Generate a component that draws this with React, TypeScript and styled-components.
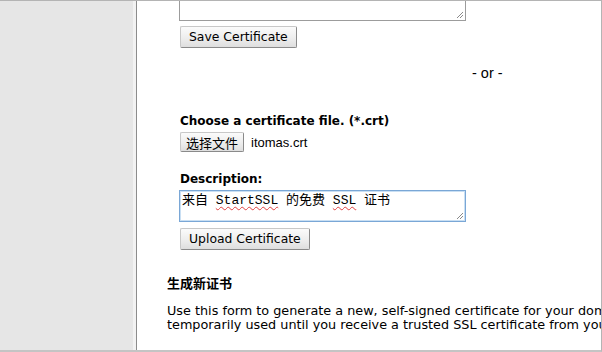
import React from 'react'
import styled, { createGlobalStyle } from 'styled-components'

const GlobalStyle = createGlobalStyle`
  html, body {
    margin: 0;
    padding: 0;
    background: #ffffff;
  }
  body {
    font-family: 'DejaVu Sans', Verdana, sans-serif;
    color: #000;
  }
`

const Frame = styled.div`
  width: 602px;
  height: 352px;
  box-sizing: border-box;
  border-top: 1px solid #b4b4b4;
  border-right: 1px solid #b4b4b4;
  border-bottom: 2px solid #c4c4c4;
  display: flex;
  overflow: hidden;
`

const Sidebar = styled.div`
  width: 133px;
  flex: 0 0 133px;
  background: #e6e6e6;
  border-right: 3px solid #f2f2f2;
`

const Divider = styled.div`
  width: 1px;
  flex: 0 0 1px;
  background: #8c8c8c;
`

const Content = styled.div`
  flex: 1;
  position: relative;
  overflow: hidden;
`

// the pane is scrolled down a little: the first textarea is cut off at the top
const Scroller = styled.div`
  width: 720px;
  margin-top: -31px;
  padding-left: 30px;
`

const Form = styled.div`
  padding-left: 13px;
`

const TextBox = styled.div<{ $focused?: boolean; $height: number }>`
  position: relative;
  box-sizing: border-box;
  width: 287px;
  height: ${p => p.$height}px;
  margin-left: -1px;
  border: 1px solid ${p => (p.$focused ? '#7aa7d6' : '#9c9c9c')};
  box-shadow: ${p => (p.$focused ? 'inset 0 0 0 1px #c9dff3' : 'none')};
  background: #fff;
  padding: 2px 2px;
  font-family: 'Liberation Mono', 'Noto Sans CJK SC', monospace;
  font-size: 13px;
  line-height: 15px;
`

const Squiggle = styled.span`
  text-decoration: underline wavy #e04040;
  text-decoration-thickness: 1px;
  text-underline-offset: 2px;
`

const Grip = styled.svg`
  position: absolute;
  right: 1px;
  bottom: 1px;
`

const Button = styled.button<{ $cjk?: boolean }>`
  display: block;
  box-sizing: border-box;
  height: ${p => (p.$cjk ? 20 : 22)}px;
  padding: 0 ${p => (p.$cjk ? 5 : 8)}px;
  border: 1px solid #c8c8c8;
  border-right-color: #8a8a8a;
  border-bottom-color: #8a8a8a;
  border-radius: 2px;
  background: linear-gradient(#fbfbfb, #ececec 60%, #dedede);
  font-family: ${p =>
    p.$cjk
      ? "'Noto Sans CJK SC', sans-serif"
      : "'DejaVu Sans', Verdana, sans-serif"};
  font-size: ${p => (p.$cjk ? 13 : 12.4)}px;
  line-height: 1;
  color: #000;
`

const OrLine = styled.div`
  font-family: 'Liberation Sans', Arial, sans-serif;
  font-size: 14.5px;
  line-height: 16px;
  padding-left: 305px;
  margin-top: 17px;
  height: 18px;
`

const Label = styled.div<{ $top: number; $bottom: number }>`
  font-weight: bold;
  font-size: 12px;
  line-height: 15px;
  margin-top: ${p => p.$top}px;
  margin-bottom: ${p => p.$bottom}px;
`

const FileRow = styled.div`
  display: flex;
  align-items: center;
  gap: 7px;
`

const FileName = styled.span`
  font-family: 'Liberation Sans', Arial, sans-serif;
  font-size: 13px;
`

const Gap = styled.div<{ $h: number }>`
  height: ${p => p.$h}px;
`

const Heading = styled.div`
  margin-top: 25px;
  font-family: 'Noto Sans CJK SC', sans-serif;
  font-weight: bold;
  font-size: 13px;
  line-height: 15px;
`

const Paragraph = styled.p`
  margin: 14px 0 0;
  font-size: 12.8px;
  line-height: 14px;
  white-space: nowrap;
`

const GripIcon = () => (
  <Grip width="8" height="8" viewBox="0 0 8 8">
    <path d="M7 1 L1 7 M7 4 L4 7" stroke="#8a8a8a" strokeWidth="1" />
  </Grip>
)

export default function App() {
  return (
    <>
      <GlobalStyle />
      <Frame>
        <Sidebar />
        <Divider />
        <Content>
          <Scroller>
            <Form>
              <TextBox $height={51}>
                <GripIcon />
              </TextBox>
              <Gap $h={5} />
              <Button>Save Certificate</Button>
            </Form>
            <OrLine>- or -</OrLine>
            <Form>
              <Label $top={31} $bottom={3}>
                Choose a certificate file. (*.crt)
              </Label>
              <FileRow>
                <Button $cjk>选择文件</Button>
                <FileName>itomas.crt</FileName>
              </FileRow>
              <Label $top={20} $bottom={3}>
                Description:
              </Label>
              <TextBox $focused $height={32}>
                来自 <Squiggle>StartSSL</Squiggle> 的免费 <Squiggle>SSL</Squiggle> 证书
                <GripIcon />
              </TextBox>
              <Gap $h={6} />
              <Button>Upload Certificate</Button>
            </Form>
            <Heading>生成新证书</Heading>
            <Paragraph>
              Use this form to generate a new, self-signed certificate for your domain. It can be
              <br />
              temporarily used until you receive a trusted SSL certificate from your provider.
            </Paragraph>
          </Scroller>
        </Content>
      </Frame>
    </>
  )
}
